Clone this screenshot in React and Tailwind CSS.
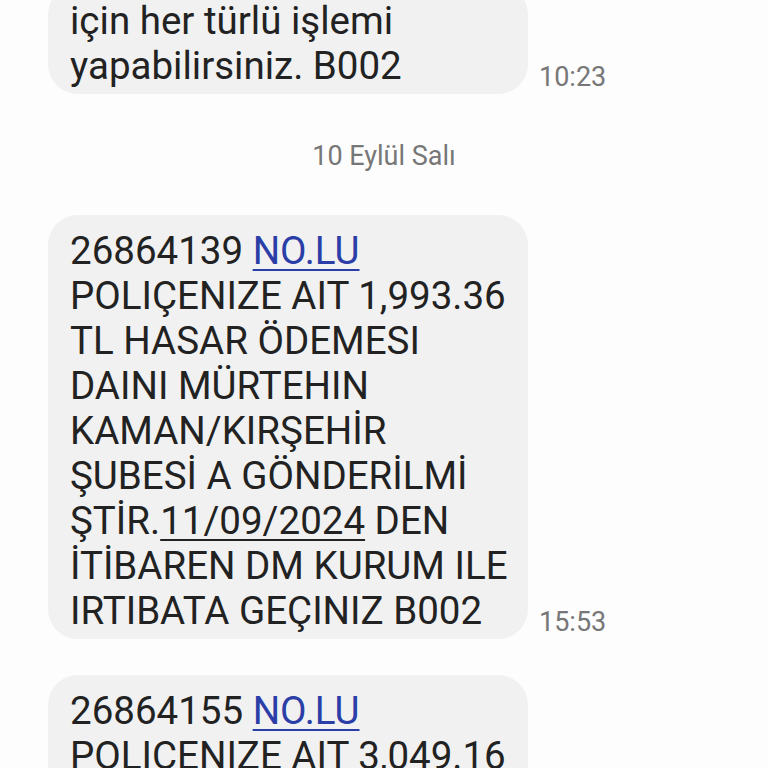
import React from "react";

const Link = ({ children }) => (
  <span className="text-[#2b3ea8] underline decoration-2 underline-offset-[5px]">{children}</span>
);

const Bubble = ({ lines, time, className = "" }) => (
  <div className={`flex items-end ${className}`}>
    <div className="ml-[48px] w-[480px] shrink-0 rounded-[30px] bg-[#f1f1f1] pl-[22px] pr-[12px] pt-[13px] pb-[6px] text-[38.5px] leading-[45px] text-[#222222]">
      {lines.map((l, i) => (
        <div key={i} className="whitespace-nowrap">{l}</div>
      ))}
    </div>
    {time && (
      <div className="ml-[11px] mb-[2px] text-[27px] leading-[30px] text-[#777777]">{time}</div>
    )}
  </div>
);

export default function App() {
  return (
    <div
      className="h-[768px] w-[768px] overflow-hidden bg-[#fdfdfd]"
      style={{ fontFamily: "Roboto, 'Noto Sans', sans-serif" }}
    >
      <div className="flex flex-col">
        <Bubble
          className="mt-[-15px]"
          lines={["için her türlü işlemi", "yapabilirsiniz. B002"]}
          time="10:23"
        />
        <div className="mt-[47px] text-center text-[27px] leading-[30px] text-[#777777]">
          10 Eylül Salı
        </div>
        <Bubble
          className="mt-[44px]"
          lines={[
            <>26864139 <Link>NO.LU</Link></>,
            "POLIÇENIZE AIT 1,993.36",
            "TL HASAR ÖDEMESI",
            "DAINI MÜRTEHIN",
            "KAMAN/KIRŞEHİR",
            "ŞUBESİ A GÖNDERİLMİ",
            <>ŞTİR.<span className="underline decoration-2 underline-offset-[5px]">11/09/2024</span> DEN</>,
            "İTİBAREN DM KURUM ILE",
            "IRTIBATA GEÇINIZ B002",
          ]}
          time="15:53"
        />
        <Bubble
          className="mt-[36px]"
          lines={[
            <>26864155 <Link>NO.LU</Link></>,
            "POLIÇENIZE AIT 3,049.16",
            "TL HASAR ÖDEMESI",
          ]}
        />
      </div>
    </div>
  );
}
